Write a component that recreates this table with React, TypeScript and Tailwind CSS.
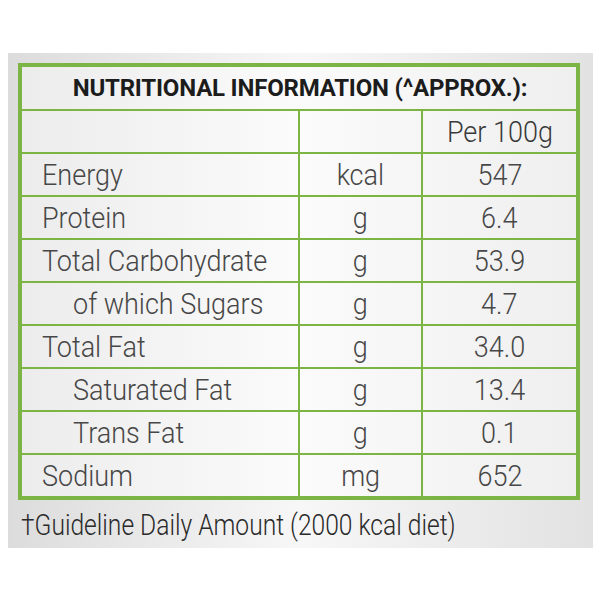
import React from "react";

type Row = { label: string; unit: string; value: string; indent?: boolean };

const rows: Row[] = [
  { label: "Energy", unit: "kcal", value: "547" },
  { label: "Protein", unit: "g", value: "6.4" },
  { label: "Total Carbohydrate", unit: "g", value: "53.9" },
  { label: "of which Sugars", unit: "g", value: "4.7", indent: true },
  { label: "Total Fat", unit: "g", value: "34.0" },
  { label: "Saturated Fat", unit: "g", value: "13.4", indent: true },
  { label: "Trans Fat", unit: "g", value: "0.1", indent: true },
  { label: "Sodium", unit: "mg", value: "652" },
];

const App: React.FC = () => {
  return (
    <div
      className="w-[600px] h-[600px] bg-white pt-[53px] pl-[8px]"
      style={{ fontFamily: "Roboto, 'Liberation Sans', sans-serif" }}
    >
      <div className="w-[585px] h-[495px] bg-gradient-to-r from-[#dcdcdc] via-[#f7f7f7] to-[#e2e2e2] pt-[10px] pl-[10px]">
        <div className="w-[562px] border-[4px] border-[#7db544] bg-gradient-to-r from-[#ececec] via-[#fbfbfb] to-[#efefef]">
          {/* title */}
          <div className="h-[44px] flex items-center justify-center border-b-[2px] border-[#7db544]">
            <span className="text-[24px] font-bold tracking-[-0.2px] text-[#1c1c1c] pl-[2px]">
              NUTRITIONAL INFORMATION (^APPROX.):
            </span>
          </div>

          {/* header */}
          <div className="h-[43px] flex border-b-[2px] border-[#7db544] font-light text-[30px] text-[#3a3a3a]">
            <div className="w-[278px] border-r-[2px] border-[#7db544]" />
            <div className="w-[123px] border-r-[2px] border-[#7db544]" />
            <div className="flex-1 flex items-center justify-center">
              <span className="inline-block scale-x-90">Per 100g</span>
            </div>
          </div>

          {rows.map((r, i) => (
            <div
              key={r.label}
              className={`flex font-light text-[30px] text-[#474747] ${
                i < rows.length - 1 ? "h-[43px] border-b-[2px] border-[#7db544]" : "h-[41px]"
              }`}
            >
              <div
                className={`w-[278px] border-r-[2px] border-[#7db544] flex items-center ${
                  r.indent ? "pl-[51px]" : "pl-[20px]"
                }`}
              >
                <span className="inline-block scale-x-90 origin-left whitespace-nowrap">{r.label}</span>
              </div>
              <div className="w-[123px] border-r-[2px] border-[#7db544] flex items-center justify-center">
                <span className="inline-block scale-x-90">{r.unit}</span>
              </div>
              <div className="flex-1 flex items-center justify-center">
                <span className="inline-block scale-x-90">{r.value}</span>
              </div>
            </div>
          ))}
        </div>

        <div className="mt-[9px] pl-[3px] font-light text-[30px] leading-[32px] text-[#2a2a2a]">
          <span className="inline-block scale-x-[0.82] origin-left whitespace-nowrap">
            †Guideline Daily Amount (2000 kcal diet)
          </span>
        </div>
      </div>
    </div>
  );
};

export default App;
